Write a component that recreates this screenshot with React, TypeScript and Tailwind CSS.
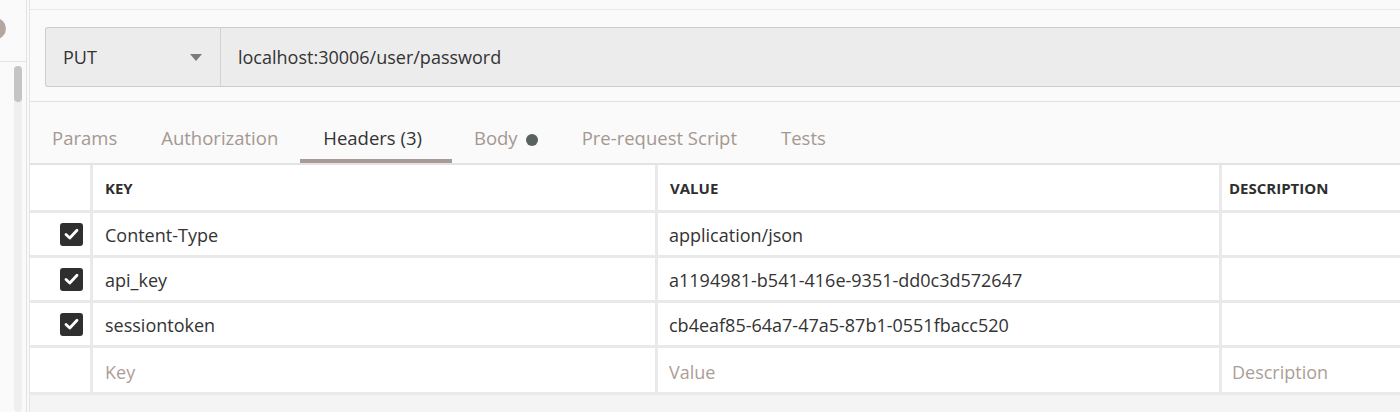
import React from "react";

const rows = [
  { k: "Content-Type", v: "application/json" },
  { k: "api_key", v: "a1194981-b541-416e-9351-dd0c3d572647" },
  { k: "sessiontoken", v: "cb4eaf85-64a7-47a5-87b1-0551fbacc520" },
];

function Check() {
  return (
    <div className="w-[23px] h-[23px] rounded-[3px] bg-[#2f2f2f] flex items-center justify-center">
      <svg width="15" height="12" viewBox="0 0 15 12">
        <path d="M2 6.5 L5.8 10 L13 2.3" fill="none" stroke="#fff" strokeWidth="2.8" strokeLinecap="round" strokeLinejoin="round" />
      </svg>
    </div>
  );
}

export default function App() {
  const tabs = [
    { t: "Params" },
    { t: "Authorization" },
    { t: "Headers (3)", active: true },
    { t: "Body", dot: true },
    { t: "Pre-request Script" },
    { t: "Tests" },
  ];
  return (
    <div className="w-[1400px] h-[412px] flex bg-[#fafafa] overflow-hidden" style={{ fontFamily: '"Open Sans", sans-serif' }}>
      {/* left sidebar */}
      <div className="w-[27px] relative border-r border-[#e2e2e2] flex flex-col">
        <div className="h-[62px] border-b border-[#e4e4e4] relative">
          <div className="absolute left-[-15px] top-[18px] w-[21px] h-[21px] rounded-full bg-[#b3a7a2]" />
        </div>
        <div className="flex-1 flex justify-start pl-[14px] pt-[4px]">
          <div className="w-[8px] h-full bg-[#efefef] rounded-full">
            <div className="w-[8px] h-[36px] rounded-full bg-[#c5c5c5]" />
          </div>
        </div>
      </div>
      <div className="w-[3px] border-r border-[#e4e4e4]" />
      {/* main */}
      <div className="flex-1 flex flex-col">
        <div className="h-[10px] border-b border-[#e8e8e8]" />
        <div className="h-[92px] border-b border-[#e1e1e1] pl-[15px] pt-[17px]">
          <div className="h-[60px] flex border border-[#cdcdcd] rounded-l-[3px] bg-[#ececec] border-r-0">
            <div className="w-[175px] flex items-center justify-between pl-[17px] pr-[18px] border-r border-[#d2d2d2]">
              <span className="text-[18px] text-[#333]">PUT</span>
              <svg width="12" height="7" viewBox="0 0 12 7"><path d="M0 0 H12 L6 7 Z" fill="#7a7a7a" /></svg>
            </div>
            <div className="flex-1 flex items-center pl-[17px]">
              <span className="text-[18px] text-[#333]">localhost:30006/user/password</span>
            </div>
          </div>
        </div>
        <div className="h-[62px] flex items-end border-b border-[#e3e3e3]">
          {tabs.map((tab) => (
            <div
              key={tab.t}
              className={
                "h-[62px] flex items-center pt-[16px] border-b-[4px] " +
                (tab.active ? "pl-[23px] pr-[30px] border-[#a89b95] text-[#333]" : "px-[22px] border-transparent text-[#a59891]")
              }
            >
              <span className="text-[18.5px]">{tab.t}</span>
              {tab.dot && <span className="ml-[8px] mt-[4px] w-[12px] h-[12px] rounded-full bg-[#58625e]" />}
            </div>
          ))}
        </div>
        <div className="grid grid-cols-[60px_562px_561px_1fr] gap-[3px] bg-[#e9e9e9] pb-[3px] border-t border-[#e3e3e3]">
          <div className="h-[45px] bg-white" />
          <div className="h-[45px] bg-white flex items-center pl-[12px] pt-[1px] text-[15px] font-bold text-[#2e2e2e]">KEY</div>
          <div className="h-[45px] bg-white flex items-center pl-[12px] pt-[1px] text-[15px] font-bold text-[#2e2e2e]">VALUE</div>
          <div className="h-[45px] bg-white flex items-center pl-[7px] pt-[1px] text-[15px] font-bold text-[#2e2e2e]">DESCRIPTION</div>
          {rows.map((r) => (
            <React.Fragment key={r.k}>
              <div className="h-[42px] bg-white flex items-center justify-end pr-[7px]"><Check /></div>
              <div className="h-[42px] bg-white flex items-center pl-[12px] pt-[2px] text-[18px] text-[#333]">{r.k}</div>
              <div className="h-[42px] bg-white flex items-center pl-[11px] pt-[2px] text-[18px] text-[#333]">{r.v}</div>
              <div className="h-[42px] bg-white" />
            </React.Fragment>
          ))}
          <div className="h-[44px] bg-white" />
          <div className="h-[44px] bg-white flex items-center pl-[12px] pt-[4px] text-[18px] text-[#ab9e97]">Key</div>
          <div className="h-[44px] bg-white flex items-center pl-[11px] pt-[4px] text-[18px] text-[#ab9e97]">Value</div>
          <div className="h-[44px] bg-white flex items-center pl-[10px] pt-[4px] text-[18px] text-[#ab9e97]">Description</div>
        </div>
        <div className="flex-1 bg-[#f4f4f4]" />
      </div>
    </div>
  );
}
